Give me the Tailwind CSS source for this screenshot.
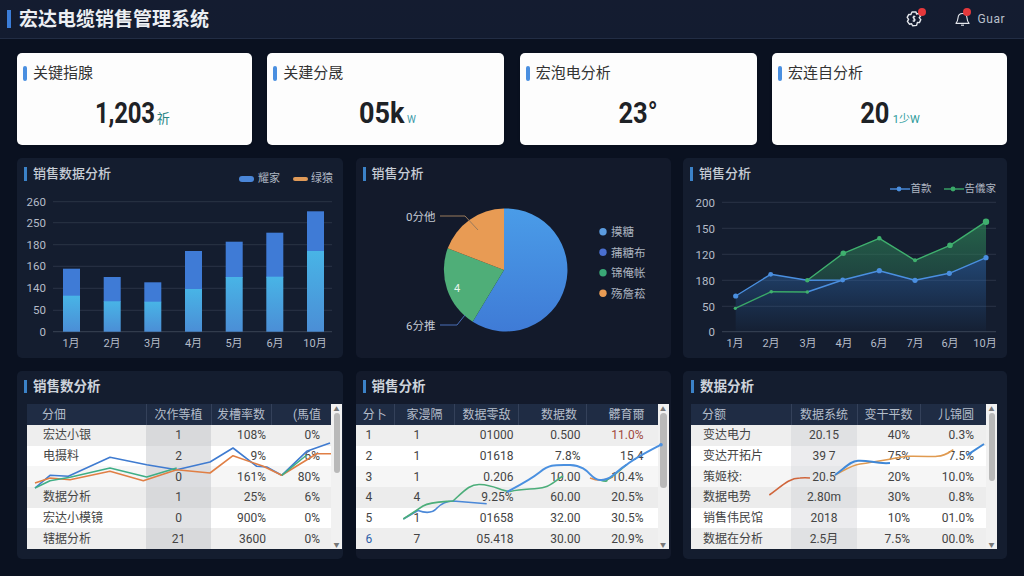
<!DOCTYPE html>
<html lang="zh">
<head>
    <meta charset="UTF-8">
    <meta name="viewport" content="width=device-width, initial-scale=1.0">
    <script src="https://cdn.jsdelivr.net/npm/@tailwindcss/browser@4"></script>
</head>
<body class="w-[1024px] h-[576px] overflow-hidden bg-[#0a1120] font-[family-name:Roboto,'Noto_Sans_CJK_SC',sans-serif]">

    <!-- header -->
    <header class="h-[39px] flex items-center bg-gradient-to-b from-[#141c30] to-[#131c30] border-b border-[#222d44] pl-[7px] pr-[19px]">
        <span class="w-[4px] h-[18px] bg-[#3b7dd8] mr-[8px]"></span>
        <h1 class="text-[19px] font-bold text-[#eceff3] leading-none">宏达电缆销售管理系统</h1>
        <div class="ml-auto flex items-center">
            <div class="relative w-[18px] h-[18px] mr-[32px]">
                <svg class="w-[18px] h-[18px]" viewBox="0 0 18 18" fill="none" stroke="#e4e7ec" stroke-width="1.4" stroke-linejoin="round">
                    <path d="M7 2 L11 2 L11.6 4 L13.6 3.4 L15.6 6 L14.2 7.6 L15.8 9.6 L14.4 12.6 L12.4 12.4 L11.6 15.4 L7.6 15.8 L6.6 13.8 L4.4 14.2 L2.4 11.4 L3.6 9.4 L2.2 7.4 L3.8 4.4 L5.8 4.6 Z"/>
                    <path d="M10.4 6.6 C8.4 5.8 7 7.4 9 8.6 C11 9.6 9.8 11.6 7.6 10.8 M9 5.4 V12" stroke-width="1.1"/>
                </svg>
                <span class="absolute top-[-2px] right-[-3px] w-[8px] h-[8px] rounded-full bg-[#e5383b]"></span>
            </div>
            <div class="relative w-[15px] h-[16px] mr-[8px]">
                <svg class="w-[15px] h-[16px]" viewBox="0 0 16 16" fill="none" stroke="#e4e7ec" stroke-width="1.2" stroke-linejoin="round">
                    <path d="M1 12.6 C2.6 11 3 9.6 3.2 7 C3.4 4 5.4 2.2 8 2.2 C10.6 2.2 12.6 4 12.8 7 C13 9.6 13.4 11 15 12.6 Z"/>
                    <path d="M6.4 14.6 H9.6"/>
                </svg>
                <span class="absolute top-[-3px] right-[-1px] w-[8px] h-[8px] rounded-full bg-[#e5383b]"></span>
            </div>
            <span class="text-[12px] text-[#b9c0cc] tracking-[0.5px] leading-none">Guar</span>
        </div>
    </header>

    <main class="w-[990px] ml-[17px] pt-[14px]">

        <!-- kpi row -->
        <section class="flex justify-between">
            <div class="w-[235px] h-[92px] bg-[#fdfdfd] rounded-[5px] shadow-sm">
                <div class="flex items-center h-[38px] pl-[6px] pt-[2px]">
                    <span class="w-[4px] h-[15px] rounded-[2px] bg-[#4a8fe0] mr-[6px]"></span>
                    <span class="text-[15px] text-[#333] leading-none">关键指腺</span>
                </div>
                <div class="flex justify-center items-baseline pr-[19px]">
                    <span class="text-[30px] font-bold text-[#1e2226] leading-[44px] scale-x-[0.8] origin-right tracking-[-0.3px]">1,203</span>
                    <span class="text-[13px] text-[#2a8585] ml-[2px]">祈</span>
                </div>
            </div>
            <div class="w-[237px] h-[92px] bg-[#fdfdfd] rounded-[5px] shadow-sm">
                <div class="flex items-center h-[38px] pl-[6px] pt-[2px]">
                    <span class="w-[4px] h-[15px] rounded-[2px] bg-[#4a8fe0] mr-[6px]"></span>
                    <span class="text-[15px] text-[#333] leading-none">关建分晟</span>
                </div>
                <div class="flex justify-center items-baseline pr-[2px]">
                    <span class="text-[30px] font-bold text-[#1e2226] leading-[44px] scale-x-[0.9] origin-right">05k</span>
                    <span class="text-[10px] text-[#3a9aa8] ml-[3px]">W</span>
                </div>
            </div>
            <div class="w-[237px] h-[92px] bg-[#fdfdfd] rounded-[5px] shadow-sm">
                <div class="flex items-center h-[38px] pl-[6px] pt-[2px]">
                    <span class="w-[4px] h-[15px] rounded-[2px] bg-[#4a8fe0] mr-[6px]"></span>
                    <span class="text-[15px] text-[#333] leading-none">宏泡电分析</span>
                </div>
                <div class="flex justify-center items-baseline">
                    <span class="text-[30px] font-bold text-[#1e2226] leading-[44px] scale-x-[0.85]">23°</span>
                </div>
            </div>
            <div class="w-[235px] h-[92px] bg-[#fdfdfd] rounded-[5px] shadow-sm">
                <div class="flex items-center h-[38px] pl-[6px] pt-[2px]">
                    <span class="w-[4px] h-[15px] rounded-[2px] bg-[#4a8fe0] mr-[6px]"></span>
                    <span class="text-[15px] text-[#333] leading-none">宏连自分析</span>
                </div>
                <div class="flex justify-center items-baseline pr-[4px]">
                    <span class="text-[30px] font-bold text-[#1e2226] leading-[44px] scale-x-[0.85] origin-right">20</span>
                    <span class="text-[11px] text-[#2a9a9a] ml-[3px]">1少W</span>
                </div>
            </div>
        </section>

        <!-- charts row -->
        <section class="flex justify-between mt-[13px]">

            <div class="w-[326px] h-[200px] bg-[#141d2f] rounded-[5px] flex flex-col">
                <div class="h-[38px] flex items-start pl-[7px] pr-[10px] pt-[9px]">
                    <span class="w-[3px] h-[14px] bg-[#3b82c8] mr-[6px]"></span>
                    <span class="text-[13px] font-medium text-[#c7cdd6] leading-[14px]">销售数据分析</span>
                    <div class="ml-auto flex items-center text-[11px] text-[#aeb6c2] leading-none mt-[6px]">
                        <span class="w-[15px] h-[6px] rounded-full bg-[#4a86d8] mr-[4px]"></span>
                        <span class="mr-[13px]">耀家</span>
                        <span class="w-[15px] h-[4px] rounded-full bg-[#e09a58] mr-[3px]"></span>
                        <span>绿猿</span>
                    </div>
                </div>
                <svg class="block" width="326" height="162" viewBox="17 196 326 162" font-size="11.5" fill="#b5bcc8">
                    <defs>
                        <linearGradient id="barlow" x1="0" y1="0" x2="0" y2="1">
                            <stop offset="0" stop-color="#48b4e6"/>
                            <stop offset="1" stop-color="#4b8ed6"/>
                        </linearGradient>
                    </defs>
                    <g stroke="#2a3446" stroke-width="1">
                        <path d="M53 201.7H332M53 222.7H332M53 244.7H332M53 266.3H332M53 288.3H332M53 310.3H332"/>
                        <path d="M53 331.7H332" stroke="#3a4456"/>
                    </g>
                    <g text-anchor="end">
                        <text x="46" y="206">260</text>
                        <text x="46" y="227">250</text>
                        <text x="46" y="249">180</text>
                        <text x="46" y="270">160</text>
                        <text x="46" y="292">140</text>
                        <text x="46" y="314">50</text>
                        <text x="46" y="336">0</text>
                    </g>
                    <g fill="#3f7bd6">
                        <rect x="63" y="268.7" width="17" height="28"/>
                        <rect x="103.7" y="277" width="17" height="25"/>
                        <rect x="144.3" y="282.3" width="17" height="20"/>
                        <rect x="185" y="251" width="17" height="39"/>
                        <rect x="225.7" y="241.7" width="17" height="36"/>
                        <rect x="266.3" y="232.7" width="17" height="45"/>
                        <rect x="307" y="211.3" width="17" height="40"/>
                    </g>
                    <g fill="url(#barlow)">
                        <rect x="63" y="295.7" width="17" height="36"/>
                        <rect x="103.7" y="301.3" width="17" height="30.4"/>
                        <rect x="144.3" y="301.7" width="17" height="30"/>
                        <rect x="185" y="289" width="17" height="42.7"/>
                        <rect x="225.7" y="277" width="17" height="54.7"/>
                        <rect x="266.3" y="276.7" width="17" height="55"/>
                        <rect x="307" y="251" width="17" height="80.7"/>
                    </g>
                    <g text-anchor="middle" font-size="11">
                        <text x="71" y="347">1月</text>
                        <text x="112" y="347">2月</text>
                        <text x="152.5" y="347">3月</text>
                        <text x="193.5" y="347">4月</text>
                        <text x="234" y="347">5月</text>
                        <text x="275" y="347">6月</text>
                        <text x="315" y="347">10月</text>
                    </g>
                </svg>
            </div>

            <div class="w-[315px] h-[200px] bg-[#131a2b] rounded-[5px] flex flex-col">
                <div class="h-[38px] flex items-start pl-[7px] pt-[9px]">
                    <span class="w-[3px] h-[14px] bg-[#3b82c8] mr-[6px]"></span>
                    <span class="text-[13px] font-medium text-[#c7cdd6] leading-[14px]">销售分析</span>
                </div>
                <svg class="block" width="315" height="162" viewBox="356 196 315 162" font-size="11.5" fill="#c3c9d3">
                    <defs>
                        <linearGradient id="pieblue" x1="0" y1="0" x2="0" y2="1">
                            <stop offset="0" stop-color="#4a9ce8"/>
                            <stop offset="1" stop-color="#3f7bd6"/>
                        </linearGradient>
                    </defs>
                    <path d="M504 270 L504 208.5 A61.5 61.5 0 1 1 472.7 321.7 Z" fill="url(#pieblue)"/>
                    <path d="M504 270 L472.7 321.7 A61.5 61.5 0 0 1 447.7 248.3 Z" fill="#4fae78"/>
                    <path d="M504 270 L447.7 248.3 A61.5 61.5 0 0 1 504 208.5 Z" fill="#e89b54"/>
                    <path d="M440 216 H465 L478 230" fill="none" stroke="#9a7a5c" stroke-width="1"/>
                    <path d="M440 325 H457 L465 315" fill="none" stroke="#4a6fb8" stroke-width="1"/>
                    <text x="406" y="220.5">0分他</text>
                    <text x="406" y="329.5">6分推</text>
                    <text x="457" y="292" text-anchor="middle" fill="#e8f5ec" font-size="11">4</text>
                    <circle cx="603" cy="231.7" r="3.7" fill="#5b9bdf"/>
                    <circle cx="603" cy="252.3" r="3.7" fill="#4a6fd0"/>
                    <circle cx="603" cy="272.7" r="3.7" fill="#3aa876"/>
                    <circle cx="603" cy="293.3" r="3.7" fill="#e89b54"/>
                    <g fill="#aab2bf" font-size="11.5">
                        <text x="611" y="236">摸糖</text>
                        <text x="611" y="256.5">蒱糖布</text>
                        <text x="611" y="277">锦俺帐</text>
                        <text x="611" y="297.5">殇詹菘</text>
                    </g>
                </svg>
            </div>

            <div class="w-[324px] h-[200px] bg-[#141d2f] rounded-[5px] flex flex-col">
                <div class="h-[38px] flex items-start pl-[7px] pr-[11px] pt-[9px]">
                    <span class="w-[3px] h-[14px] bg-[#3b82c8] mr-[6px]"></span>
                    <span class="text-[13px] font-medium text-[#c7cdd6] leading-[14px]">销售分析</span>
                    <div class="ml-auto flex items-center text-[10.5px] text-[#aeb6c2] leading-none mt-[17px]">
                        <svg class="mr-[1px]" width="20" height="8" viewBox="0 0 20 8"><path d="M0 4H20" stroke="#4a8fe0" stroke-width="1.4"/><circle cx="9" cy="4" r="2.4" fill="#4a8fe0"/></svg>
                        <span class="mr-[12px]">首款</span>
                        <svg class="mr-[1px]" width="20" height="8" viewBox="0 0 20 8"><path d="M0 4H20" stroke="#3aa868" stroke-width="1.4"/><circle cx="9" cy="4" r="2.4" fill="#3aa868"/></svg>
                        <span>告儀家</span>
                    </div>
                </div>
                <svg class="block" width="324" height="162" viewBox="683 196 324 162" font-size="11.5" fill="#b5bcc8">
                    <defs>
                        <linearGradient id="areablue" x1="0" y1="0" x2="0" y2="1">
                            <stop offset="0" stop-color="#2f6fb8" stop-opacity="0.5"/>
                            <stop offset="1" stop-color="#2f6fb8" stop-opacity="0.03"/>
                        </linearGradient>
                        <linearGradient id="areagreen" x1="0" y1="0" x2="0" y2="1">
                            <stop offset="0" stop-color="#2e8a58" stop-opacity="0.65"/>
                            <stop offset="1" stop-color="#2e7a58" stop-opacity="0.4"/>
                        </linearGradient>
                    </defs>
                    <g stroke="#2a3446" stroke-width="1">
                        <path d="M722 202.3H996M722 228.3H996M722 254.3H996M722 280.3H996M722 306.3H996"/>
                        <path d="M722 331.7H996" stroke="#3a4456"/>
                    </g>
                    <g text-anchor="end">
                        <text x="715" y="206.5">200</text>
                        <text x="715" y="232.5">150</text>
                        <text x="715" y="258.5">120</text>
                        <text x="715" y="284.5">180</text>
                        <text x="715" y="310.5">50</text>
                        <text x="715" y="336">0</text>
                    </g>
                    <path d="M735.7 296 L770.7 274.3 L807.3 280.3 L842.7 280 L879.3 270.7 L915 280.3 L949.3 273.3 L986 257.7 V331.7 H735.7 Z" fill="url(#areablue)"/>
                    <path d="M807.3 280.3 L843.3 253.3 L879.3 238.3 L915 260.3 L950 245.3 L986 221.7 V257.7 L949.3 273.3 L915 280.3 L879.3 270.7 L842.7 280 Z" fill="url(#areagreen)"/>
                    <g fill="none" stroke-width="1.4" stroke-linejoin="round">
                        <path d="M735.3 308.3 L771.3 291.7 L807.3 292" stroke="#3aa868"/>
                        <path d="M807.3 292 L842.7 280" stroke="#4a8fe0"/>
                        <path d="M807.3 280.3 L843.3 253.3 L879.3 238.3 L915 260.3 L950 245.3 L986 221.7" stroke="#3fb06e"/>
                        <path d="M735.7 296 L770.7 274.3 L807.3 280.3 L842.7 280 L879.3 270.7 L915 280.3 L949.3 273.3 L986 257.7" stroke="#4a8fe0"/>
                    </g>
                    <g fill="#4a8fe0">
                        <circle cx="735.7" cy="296" r="2.6"/>
                        <circle cx="770.7" cy="274.3" r="2.4"/>
                        <circle cx="842.7" cy="280" r="2.4"/>
                        <circle cx="879.3" cy="270.7" r="2.6"/>
                        <circle cx="915" cy="280.3" r="2.6"/>
                        <circle cx="949.3" cy="273.3" r="2.6"/>
                        <circle cx="986" cy="257.7" r="2.6"/>
                    </g>
                    <g fill="#3fb06e">
                        <circle cx="735.3" cy="308.3" r="1.6"/>
                        <circle cx="771.3" cy="291.7" r="1.8"/>
                        <circle cx="807.3" cy="292" r="1.8"/>
                        <circle cx="807.3" cy="280.3" r="2.2"/>
                        <circle cx="843.3" cy="253.3" r="2.8"/>
                        <circle cx="879.3" cy="238.3" r="2.2"/>
                        <circle cx="915" cy="260.3" r="2"/>
                        <circle cx="950" cy="245.3" r="2.8"/>
                        <circle cx="986" cy="221.7" r="3.2"/>
                    </g>
                    <g text-anchor="middle" font-size="11">
                        <text x="735" y="347">1月</text>
                        <text x="771" y="347">2月</text>
                        <text x="808" y="347">3月</text>
                        <text x="844" y="347">4月</text>
                        <text x="879" y="347">6月</text>
                        <text x="915" y="347">7月</text>
                        <text x="950" y="347">6月</text>
                        <text x="985" y="347">10月</text>
                    </g>
                </svg>
            </div>
        </section>

        <!-- table row -->
        <section class="flex justify-between mt-[13px]">

            <div class="w-[326px] h-[188px] bg-[#141d2f] rounded-[5px] pl-[10px] pr-[1px]">
                <div class="h-[31px] mb-[2px] flex items-center">
                    <span class="w-[3px] h-[13px] bg-[#3b82c8] ml-[-3px] mr-[6px]"></span>
                    <span class="text-[13.5px] font-bold text-[#cdd3db] leading-none">销售数分析</span>
                </div>
                <div class="relative flex h-[145px]">
                    <table class="w-[304px] h-[145px] table-fixed text-[12px] leading-none text-[#444]">
                        <colgroup><col class="w-[119px]"><col class="w-[65px]"><col class="w-[60px]"><col class="w-[60px]"></colgroup>
                        <thead class="bg-[#1f2c44] text-[#b4bdca]">
                            <tr class="h-[21px]"><th class="font-normal text-left pl-[15px]">分佃</th><th class="font-normal border-l border-[#34415a]">次作等植</th><th class="font-normal border-l border-[#34415a]">发槽率数</th><th class="font-normal text-right pr-[10px] border-l border-[#34415a]">(馬值</th></tr>
                        </thead>
                        <tbody>
                            <tr class="bg-[#eeeeee]"><td class="pl-[16px]">宏达小银</td><td class="text-center bg-[#d8d9db]">1</td><td class="text-right pr-[5px]">108%</td><td class="text-right pr-[11px]">0%</td></tr>
                            <tr class="bg-white"><td class="pl-[16px]">电摄料</td><td class="text-center bg-[#e2e3e5]">2</td><td class="text-right pr-[5px]">9%</td><td class="text-right pr-[11px]">6%</td></tr>
                            <tr class="bg-[#f6f6f6]"><td class="pl-[16px]"></td><td class="text-center bg-[#dcdde0]">0</td><td class="text-right pr-[5px]">161%</td><td class="text-right pr-[11px]">80%</td></tr>
                            <tr class="bg-[#ececec]"><td class="pl-[16px]">数据分析</td><td class="text-center bg-[#d8d9db]">1</td><td class="text-right pr-[5px]">25%</td><td class="text-right pr-[11px]">6%</td></tr>
                            <tr class="bg-white"><td class="pl-[16px]">宏达小模镜</td><td class="text-center bg-[#e2e3e5]">0</td><td class="text-right pr-[5px]">900%</td><td class="text-right pr-[11px]">0%</td></tr>
                            <tr class="bg-[#eeeeee]"><td class="pl-[16px]">辖据分析</td><td class="text-center bg-[#d8d9db]">21</td><td class="text-right pr-[5px]">3600</td><td class="text-right pr-[11px]">0%</td></tr>
                        </tbody>
                    </table>
                    <div class="w-[11px] bg-[#f1f1f1] flex flex-col items-center">
                        <span class="text-[6px] leading-[9px] text-[#777]">▲</span>
                        <span class="w-[6px] h-[60px] rounded-full bg-[#b9b9b9]"></span>
                        <span class="mt-auto text-[6px] leading-[9px] text-[#777]">▼</span>
                    </div>
                    <svg class="absolute left-0 top-0 pointer-events-none" width="315" height="145" viewBox="27 404 315 145" fill="none" stroke-width="1.6" stroke-linejoin="round">
                        <path d="M35 488 L50 475.3 L68.3 476.3 L110 457.3 L146.7 464.7 L176.7 469.7 L210 462 L233 448 L256.7 466.3 L266.7 467 L281.7 475.3 L306.7 451.3 L330 443" stroke="#3f7bd0"/>
                        <path d="M35 483 L50 478 L70 479.7 L110 471.3 L143.3 480.7 L176.7 469.7 L210 473 L233 455.7 L263.3 466.3 L281.7 475.3 L316.7 453.7 L331 453.7" stroke="#e07f45"/>
                        <path d="M35 488 L50 480.7 L70 477.3 L110 468 L146.7 477 L176.7 468 M281.7 475.3 L306.7 455" stroke="#3fae86"/>
                    </svg>
                </div>
            </div>

            <div class="w-[315px] h-[188px] bg-[#131a2b] rounded-[5px] pr-[2px]">
                <div class="h-[31px] mb-[2px] flex items-center pl-[7px]">
                    <span class="w-[3px] h-[13px] bg-[#3b82c8] mr-[6px]"></span>
                    <span class="text-[13.5px] font-bold text-[#cdd3db] leading-none">销售分析</span>
                </div>
                <div class="relative flex h-[145px]">
                    <table class="w-[302px] h-[145px] table-fixed text-[12px] leading-none text-[#444]">
                        <colgroup><col class="w-[39px]"><col class="w-[60px]"><col class="w-[64px]"><col class="w-[68px]"><col class="w-[71px]"></colgroup>
                        <thead class="bg-[#1f2c44] text-[#b4bdca]">
                            <tr class="h-[21px]"><th class="font-normal">分卜</th><th class="font-normal border-l border-[#34415a]">家漫隔</th><th class="font-normal border-l border-[#34415a]">数据零敌</th><th class="font-normal text-right pr-[9px] border-l border-[#34415a]">数据数</th><th class="font-normal text-right pr-[13px] border-l border-[#34415a]">髒育爾</th></tr>
                        </thead>
                        <tbody>
                            <tr class="bg-[#eeeeee]"><td class="pl-[10px]">1</td><td class="pl-[19px]">1</td><td class="text-right pr-[5px]">01000</td><td class="text-right pr-[6px]">0.500</td><td class="text-right pr-[14px] text-[#a0483c]">11.0%</td></tr>
                            <tr class="bg-white"><td class="pl-[10px]">2</td><td class="pl-[19px]">1</td><td class="text-right pr-[5px]">01618</td><td class="text-right pr-[6px]">7.8%</td><td class="text-right pr-[14px]">15.4</td></tr>
                            <tr class="bg-[#f6f6f6]"><td class="pl-[10px]">3</td><td class="pl-[19px]">1</td><td class="text-right pr-[5px]">0.206</td><td class="text-right pr-[6px]">10.00</td><td class="text-right pr-[14px]">10.4%</td></tr>
                            <tr class="bg-[#ececec]"><td class="pl-[10px]">4</td><td class="pl-[19px]">4</td><td class="text-right pr-[5px]">9.25%</td><td class="text-right pr-[6px]">60.00</td><td class="text-right pr-[14px]">20.5%</td></tr>
                            <tr class="bg-white"><td class="pl-[10px]">5</td><td class="pl-[19px]">1</td><td class="text-right pr-[5px]">01658</td><td class="text-right pr-[6px]">32.00</td><td class="text-right pr-[14px]">30.5%</td></tr>
                            <tr class="bg-[#eeeeee]"><td class="pl-[10px] text-[#2f5fa8]">6</td><td class="pl-[19px]">7</td><td class="text-right pr-[5px]">05.418</td><td class="text-right pr-[6px]">30.00</td><td class="text-right pr-[14px]">20.9%</td></tr>
                        </tbody>
                    </table>
                    <div class="w-[11px] bg-[#f1f1f1] flex flex-col items-center">
                        <span class="text-[6px] leading-[9px] text-[#777]">▲</span>
                        <span class="w-[7px] h-[75px] rounded-full bg-[#b9b9b9]"></span>
                        <span class="mt-auto text-[6px] leading-[9px] text-[#777]">▼</span>
                    </div>
                    <svg class="absolute left-0 top-0 pointer-events-none" width="313" height="145" viewBox="356 404 313 145" fill="none" stroke-width="1.6" stroke-linejoin="round">
                        <path d="M403.3 519 L418 510.5 C425 513 432 514 437 508 C442 503 447 501 453 501 L486.7 503.7" stroke="#4a88d8"/>
                        <path d="M403.3 519 L423 506 C430 502 440 502 453 501 C465 490 470 484 480 484.5 C495 485 500 491 510 491.5 C525 488 535 490 545 487 C552 485 556 480 563 476" stroke="#4cae7a"/>
                        <path d="M590 478 C600 482 606 480 613 477" stroke="#e08a4a"/>
                        <path d="M600 480 C606 482 608 481 606.7 480 C612 478 620 470 626.7 464.7" stroke="#4cae7a"/>
                        <path d="M506.7 492 C520 485 530 480 540 472 C550 464 555 465 570 465 C590 466 590 480 600 480 C610 481 615 472 626.7 464.7 C635 458 645 453 661 444.7" stroke="#4a90e0" stroke-width="2"/>
                        <circle cx="661" cy="444.7" r="1.8" fill="#4a90e0"/>
                    </svg>
                </div>
            </div>

            <div class="w-[324px] h-[188px] bg-[#141d2f] rounded-[5px] pl-[8px] pr-[10px]">
                <div class="h-[31px] mb-[2px] flex items-center">
                    <span class="w-[3px] h-[13px] bg-[#3b82c8] mr-[6px]"></span>
                    <span class="text-[13.5px] font-bold text-[#cdd3db] leading-none">数据分析</span>
                </div>
                <div class="relative flex h-[145px]">
                    <table class="w-[295px] h-[145px] table-fixed text-[12px] leading-none text-[#444]">
                        <colgroup><col class="w-[100px]"><col class="w-[66px]"><col class="w-[63px]"><col class="w-[66px]"></colgroup>
                        <thead class="bg-[#1f2c44] text-[#b4bdca]">
                            <tr class="h-[21px]"><th class="font-normal text-left pl-[11px]">分额</th><th class="font-normal border-l border-[#34415a]">数据系统</th><th class="font-normal border-l border-[#34415a]">变干平数</th><th class="font-normal text-right pr-[12px] border-l border-[#34415a]">儿锦圆</th></tr>
                        </thead>
                        <tbody>
                            <tr class="bg-[#eeeeee]"><td class="pl-[12px]">变达电力</td><td class="text-center bg-[#e0e1e3]">20.15</td><td class="text-right pr-[10px]">40%</td><td class="text-right pr-[12px]">0.3%</td></tr>
                            <tr class="bg-white"><td class="pl-[12px]">变达开拓片</td><td class="text-center bg-[#ececee]">39 7</td><td class="text-right pr-[10px]">75%</td><td class="text-right pr-[12px]">7.5%</td></tr>
                            <tr class="bg-[#f6f6f6]"><td class="pl-[12px]">策姬校:</td><td class="text-center bg-[#e6e7e9]">20.5</td><td class="text-right pr-[10px]">20%</td><td class="text-right pr-[12px]">10.0%</td></tr>
                            <tr class="bg-[#ececec]"><td class="pl-[12px]">数据电势</td><td class="text-center bg-[#e0e1e3]">2.80m</td><td class="text-right pr-[10px]">30%</td><td class="text-right pr-[12px]">0.8%</td></tr>
                            <tr class="bg-white"><td class="pl-[12px]">销售伟民馆</td><td class="text-center bg-[#ececee]">2018</td><td class="text-right pr-[10px]">10%</td><td class="text-right pr-[12px]">01.0%</td></tr>
                            <tr class="bg-[#eeeeee]"><td class="pl-[12px]">数据在分析</td><td class="text-center bg-[#e0e1e3]">2.5月</td><td class="text-right pr-[10px]">7.5%</td><td class="text-right pr-[12px]">00.0%</td></tr>
                        </tbody>
                    </table>
                    <div class="w-[11px] bg-[#f1f1f1] flex flex-col items-center">
                        <span class="text-[6px] leading-[9px] text-[#777]">▲</span>
                        <span class="w-[6px] h-[68px] rounded-full bg-[#b9b9b9]"></span>
                        <span class="mt-auto text-[6px] leading-[9px] text-[#777]">▼</span>
                    </div>
                    <svg class="absolute left-0 top-0 pointer-events-none" width="306" height="145" viewBox="691 404 306 145" fill="none" stroke-width="1.6" stroke-linejoin="round">
                        <path d="M769.3 495 C780 488 788 478 800 478 C805 477.5 810 478 810 478" stroke="#d0663c"/>
                        <path d="M835 475 C845 470 852 465 860 464 C875 462 885 460 907 456.3 C925 456 935 457 937 456.3 C945 456 950 452 953.3 449.7" stroke="#e09a50"/>
                        <path d="M835 475 C845 468 850 461 858 460.7 C870 460 875 464 890 463" stroke="#3f88d8" stroke-width="2"/>
                        <path d="M966.7 455.3 L984 444" stroke="#3f88d8" stroke-width="2"/>
                    </svg>
                </div>
            </div>
        </section>
    </main>

</body>
</html>
